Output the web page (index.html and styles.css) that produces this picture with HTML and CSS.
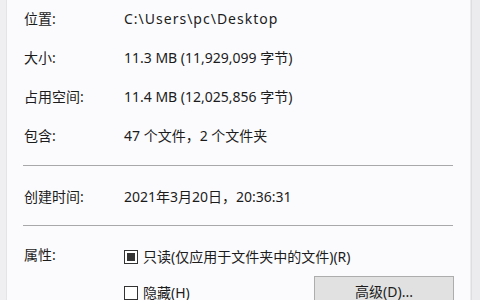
FILE: index.html
```html
<!doctype html>
<html lang="zh-CN">
<head>
  <meta charset="UTF-8" />
  <title>Desktop 属性</title>
  <link rel="stylesheet" href="styles.css">
</head>
<body>
  <div class="window">
    <div class="edge-left"></div>
    <main class="panel">
      <section class="group">
        <div class="row"><span class="label">位置:</span><span class="value path">C:\Users\pc\Desktop</span></div>
        <div class="row"><span class="label">大小:</span><span class="value">11.3 MB (11,929,099 字节)</span></div>
        <div class="row"><span class="label">占用空间:</span><span class="value">11.4 MB (12,025,856 字节)</span></div>
        <div class="row"><span class="label">包含:</span><span class="value">47 个文件，2 个文件夹</span></div>
      </section>

      <hr class="sep sep-a">

      <section class="group">
        <div class="row"><span class="label">创建时间:</span><span class="value">2021年3月20日，20:36:31</span></div>
      </section>

      <hr class="sep sep-b">

      <section class="attrs">
        <span class="label">属性:</span>
        <div class="checks">
          <label class="check">
            <span class="box box-mixed"></span>
            <span>只读(仅应用于文件夹中的文件)(R)</span>
          </label>
          <div class="check-line">
            <label class="check">
              <span class="box"></span>
              <span>隐藏(H)</span>
            </label>
            <button class="btn">高级(D)...</button>
          </div>
        </div>
      </section>
    </main>
    <div class="edge-right"></div>
  </div>
</body>
</html>
```

FILE: styles.css
```css
* { box-sizing: border-box; }
html, body { margin: 0; height: 100%; }
body {
  font-family: "Noto Sans", "Noto Sans CJK SC", sans-serif;
  font-size: 14px;
  color: #1c1c1c;
  background: #f0f0f0;
  overflow: hidden;
}
.window { display: flex; height: 300px; }
.edge-left { width: 7px; background: #efeff1; border-right: 1px solid #e4e4e6; }
.edge-right { width: 9px; background: #ececee; border-left: 1px solid #dedee0; }
.panel {
  flex: 1;
  background: #fbfbfd;
  padding: 9px 17px 0 16px;
  border-right: 1px solid #ececee;
}
.row {
  display: grid;
  grid-template-columns: 101px 1fr;
  height: 20px;
  line-height: 20px;
  margin-bottom: 19px;
  white-space: nowrap;
}
.group .row:last-child { margin-bottom: 0; }
.label { padding-left: 1px; }
.path { letter-spacing: 1px; }
.sep { border: 0; border-top: 1px solid #a8a8aa; margin: 0; }
.sep-a { margin-top: 19px; margin-bottom: 21px; }
.sep-b { margin-top: 18px; margin-bottom: 19px; }

.attrs {
  display: grid;
  grid-template-columns: 101px 1fr;
  line-height: 20px;
  white-space: nowrap;
}
.checks { display: flex; flex-direction: column; gap: 9px; padding-top: 2px; }
.check { display: flex; align-items: center; gap: 5px; }
.check-line { display: flex; align-items: center; justify-content: space-between; }
.box {
  width: 14px; height: 14px;
  border: 1px solid #333;
  background: #fff;
  display: flex; align-items: center; justify-content: center;
}
.box-mixed::after {
  content: "";
  width: 8px; height: 8px;
  background: #333;
}
.btn {
  font: inherit;
  color: #1c1c1c;
  width: 140px;
  height: 34px;
  margin-right: -1px;
  background: #e1e1e1;
  border: 1px solid #adadad;
  padding: 0 0 2px;
}
```
